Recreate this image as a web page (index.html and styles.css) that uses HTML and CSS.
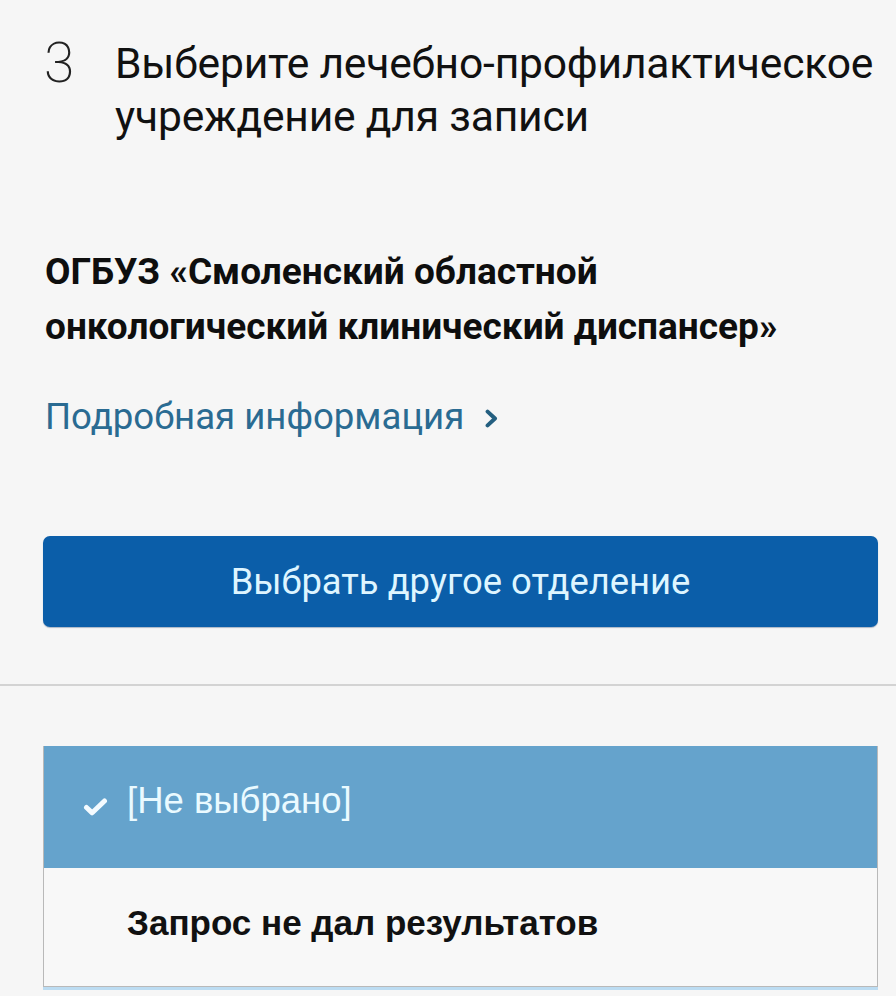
FILE: index.html
```html
<!DOCTYPE html>
<html lang="ru">
<head>
<meta charset="utf-8">
<link rel="stylesheet" href="styles.css">
</head>
<body>
<main class="page">
  <section class="step">
    <div class="step-num">3</div>
    <h1 class="step-title">Выберите лечебно-профилактическое учреждение для записи</h1>
  </section>

  <section class="org">
    <h2 class="org-name">ОГБУЗ «Смоленский областной онкологический клинический диспансер»</h2>
    <a class="more-link" href="#">Подробная информация<svg class="chev" viewBox="0 0 13 19" width="13" height="19"><path d="M2.6 2.6 L10 9.5 L2.6 16.4" fill="none" stroke="currentColor" stroke-width="4" stroke-linecap="round" stroke-linejoin="round"/></svg></a>
  </section>

  <button class="btn-primary" type="button">Выбрать другое отделение</button>

  <hr class="divider">

  <div class="dropdown">
    <div class="dd-item dd-selected">
      <svg class="check" viewBox="0 0 25 21" width="25" height="21"><path d="M3.5 11.5 L9.2 16.8 L21.5 5" fill="none" stroke="#f4fbff" stroke-width="5" stroke-linecap="round" stroke-linejoin="round"/></svg>
      <span class="dd-text">[Не выбрано]</span>
    </div>
    <div class="dd-item dd-empty">
      <span class="dd-text">Запрос не дал результатов</span>
    </div>
  </div>
</main>
</body>
</html>
```

FILE: styles.css
```css
html, body {
  margin: 0;
  padding: 0;
  background: #f6f6f6;
}

.page {
  width: 896px;
  height: 996px;
  overflow: hidden;
  font-family: Roboto, "Noto Sans", sans-serif;
  color: #111;
}

.step {
  display: flex;
  align-items: flex-start;
  padding: 37px 10px 0 44px;
}

.step-num {
  width: 71px;
  flex: none;
  font-family: Roboto, sans-serif;
  font-weight: 200;
  font-size: 55px;
  line-height: 53px;
  color: #222;
}

.step-title {
  margin: 0;
  font-weight: 400;
  font-size: 42.6px;
  line-height: 53px;
  color: #111;
  letter-spacing: -0.2px;
}

.org {
  padding: 0 20px 0 45px;
  margin-top: 101px;
}

.org-name {
  margin: 0;
  font-weight: 700;
  font-size: 37px;
  line-height: 55px;
  color: #0e0e0e;
  width: 790px;
}

.more-link {
  display: inline-flex;
  align-items: center;
  gap: 21px;
  margin-top: 41px;
  font-size: 36.6px;
  line-height: 44px;
  color: #2a6b92;
  text-decoration: none;
}

.chev {
  margin-top: 3px;
  color: #245f80;
}

.btn-primary {
  display: block;
  box-sizing: border-box;
  margin: 97px 18px 0 43px;
  width: 835px;
  height: 91px;
  border: 0;
  border-radius: 7px;
  background: #0b5ea9;
  color: #def5ff;
  font-family: Roboto, sans-serif;
  font-size: 36.4px;
  font-weight: 400;
  box-shadow: 0 1px 1px rgba(0, 40, 90, 0.3);
}

.divider {
  margin: 57px 0 0 0;
  border: 0;
  height: 2px;
  background: #d3d3d3;
}

.dropdown {
  box-sizing: border-box;
  margin: 60px 18px 0 43px;
  width: 835px;
  border: 1px solid #b9b9b9;
  border-top: 0;
  background: #f8f8f8;
  box-shadow: 0 3px 0 #bcdcf2;
}

.dd-item {
  display: flex;
  align-items: center;
  padding-left: 39px;
  font-family: "Liberation Sans", Arial, sans-serif;
}

.dd-selected {
  height: 122px;
  background: #65a3cc;
  padding-bottom: 12px;
  box-sizing: border-box;
}

.check {
  margin-right: 19px;
  margin-top: 10px;
}

.dd-selected .dd-text {
  font-size: 36.5px;
  color: #eafaff;
}

.dd-empty {
  height: 118px;
  padding-left: 83px;
  padding-bottom: 8px;
  box-sizing: border-box;
}

.dd-empty .dd-text {
  font-size: 35px;
  font-weight: 700;
  color: #111;
}
```
